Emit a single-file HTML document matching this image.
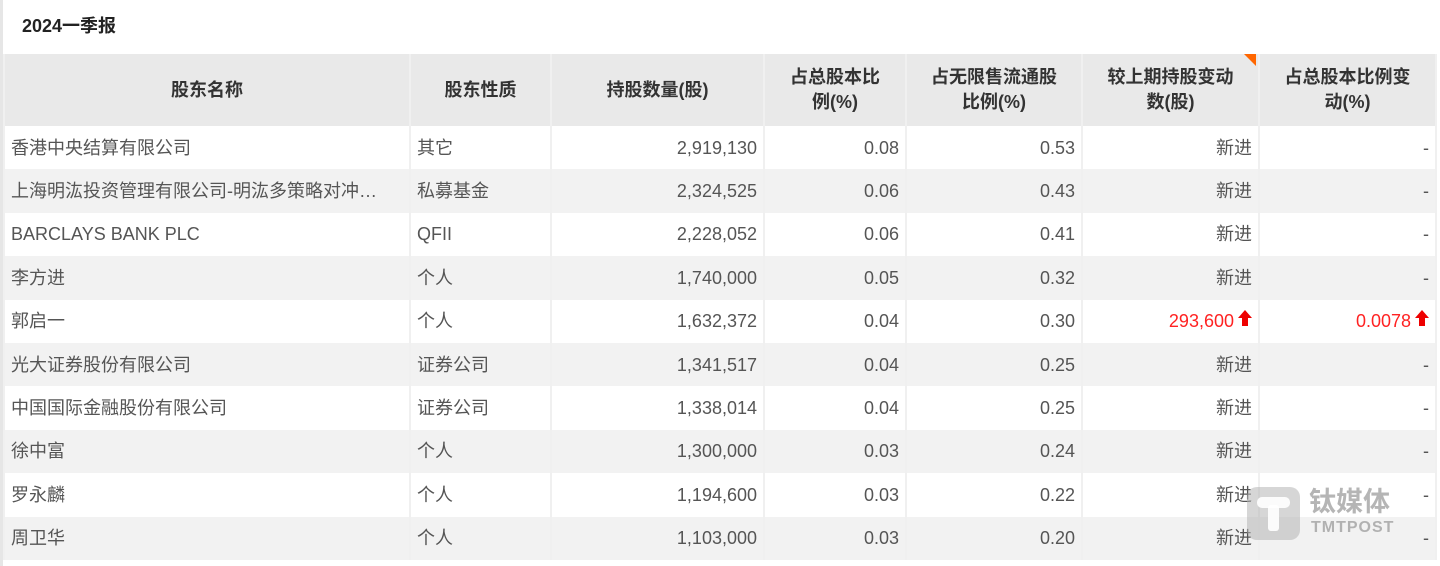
<!DOCTYPE html>
<html><head><meta charset="utf-8"><style>
body{margin:0;width:1440px;height:566px;background:#fff;position:relative;overflow:hidden;font-family:"Liberation Sans","Noto Sans CJK SC",sans-serif;}
.title{position:absolute;left:22px;top:12px;font-size:18px;font-weight:bold;color:#222;}
.lb{position:absolute;left:0;top:0;width:3px;height:566px;background:#e6e6e6;}
table{position:absolute;left:3px;top:54px;border-collapse:collapse;table-layout:fixed;}
td,th{border-left:2px solid #f0f0f0;border-right:2px solid #f0f0f0;padding:0 6px;font-size:18px;white-space:nowrap;overflow:hidden;}
th{background:#e9e9e9;height:72px;color:#333;font-weight:bold;line-height:25px;text-align:center;font-size:18px;}
td{height:43.4px;color:#555;line-height:20px;}
tr:nth-child(odd) td{background:#f2f2f2;}
tr:nth-child(even) td{background:#fff;}
.r{text-align:right;}
.red{color:#f22;}
.up{display:inline-block;width:0;height:0;border-left:7px solid transparent;border-right:7px solid transparent;border-bottom:8px solid #e00;position:relative;top:-9px;margin-left:4px;}
.up:after{content:"";position:absolute;left:-3px;top:7px;width:6px;height:9px;background:#e00;}
.tri{position:absolute;left:1244px;top:54px;width:0;height:0;border-top:12px solid #f60;border-left:12px solid transparent;}
.wm{position:absolute;left:1247px;top:487px;width:53px;height:53px;border-radius:10px;background:rgba(180,180,180,.55);}
.wm:before{content:"";position:absolute;left:10px;top:10px;width:33px;height:11px;background:#fff;border-radius:5px;opacity:.9}
.wm:after{content:"";position:absolute;left:21px;top:18px;width:11px;height:26px;background:#fff;border-radius:3px;opacity:.9}
.wt{position:absolute;left:1309px;top:487px;color:rgba(150,150,150,.7);font-size:27px;font-weight:bold;line-height:30px;}
.wt2{position:absolute;left:1311px;top:519px;color:rgba(150,150,150,.7);font-size:16px;font-weight:bold;letter-spacing:1px;}
</style></head><body>
<div class="lb"></div>
<div class="title">2024一季报</div>
<table>
<colgroup><col style="width:406px"><col style="width:141px"><col style="width:213px"><col style="width:142px"><col style="width:176px"><col style="width:177px"><col style="width:177px"></colgroup>
<tr><th>股东名称</th><th>股东性质</th><th>持股数量(股)</th><th>占总股本比<br>例(%)</th><th>占无限售流通股<br>比例(%)</th><th>较上期持股变动<br>数(股)</th><th>占总股本比例变<br>动(%)</th></tr>
<tr><td>香港中央结算有限公司</td><td>其它</td><td class="r">2,919,130</td><td class="r">0.08</td><td class="r">0.53</td><td class="r">新进</td><td class="r">-</td></tr>
<tr><td>上海明汯投资管理有限公司-明汯多策略对冲…</td><td>私募基金</td><td class="r">2,324,525</td><td class="r">0.06</td><td class="r">0.43</td><td class="r">新进</td><td class="r">-</td></tr>
<tr><td>BARCLAYS BANK PLC</td><td>QFII</td><td class="r">2,228,052</td><td class="r">0.06</td><td class="r">0.41</td><td class="r">新进</td><td class="r">-</td></tr>
<tr><td>李方进</td><td>个人</td><td class="r">1,740,000</td><td class="r">0.05</td><td class="r">0.32</td><td class="r">新进</td><td class="r">-</td></tr>
<tr><td>郭启一</td><td>个人</td><td class="r">1,632,372</td><td class="r">0.04</td><td class="r">0.30</td><td class="r red">293,600<span class="up"></span></td><td class="r red">0.0078<span class="up"></span></td></tr>
<tr><td>光大证券股份有限公司</td><td>证券公司</td><td class="r">1,341,517</td><td class="r">0.04</td><td class="r">0.25</td><td class="r">新进</td><td class="r">-</td></tr>
<tr><td>中国国际金融股份有限公司</td><td>证券公司</td><td class="r">1,338,014</td><td class="r">0.04</td><td class="r">0.25</td><td class="r">新进</td><td class="r">-</td></tr>
<tr><td>徐中富</td><td>个人</td><td class="r">1,300,000</td><td class="r">0.03</td><td class="r">0.24</td><td class="r">新进</td><td class="r">-</td></tr>
<tr><td>罗永麟</td><td>个人</td><td class="r">1,194,600</td><td class="r">0.03</td><td class="r">0.22</td><td class="r">新进</td><td class="r">-</td></tr>
<tr><td>周卫华</td><td>个人</td><td class="r">1,103,000</td><td class="r">0.03</td><td class="r">0.20</td><td class="r">新进</td><td class="r">-</td></tr>
</table>
<div class="tri"></div>
<div class="wm"></div>
<div class="wt">钛媒体</div>
<div class="wt2">TMTPOST</div>
</body></html>
